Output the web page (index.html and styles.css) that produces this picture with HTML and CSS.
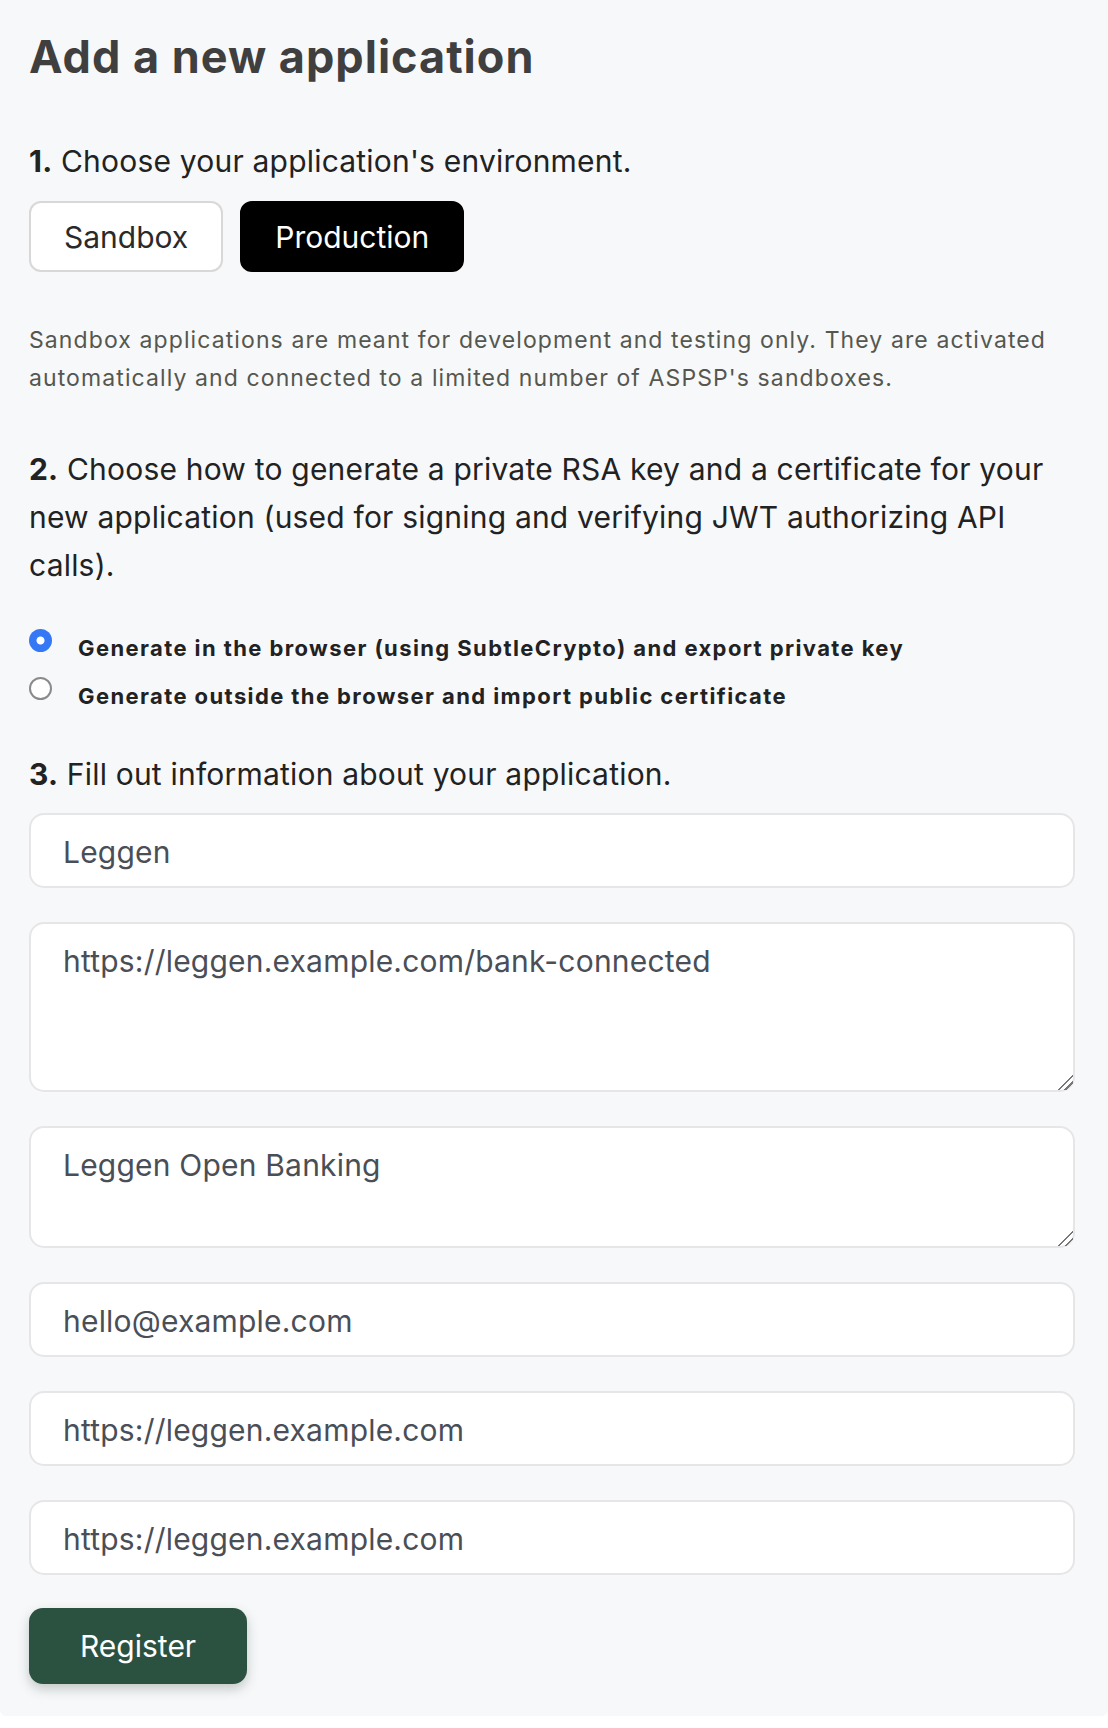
FILE: index.html
```html
<!DOCTYPE html>
<html lang="en">
<head>
    <meta charset="UTF-8">
    <meta name="viewport" content="width=device-width, initial-scale=1.0">
    <title>Add a new application</title>
    <link rel="stylesheet" href="styles.css">
</head>
<body>
    <div class="page">
      <h1>Add a new application</h1>

      <p class="step"><strong>1.</strong> Choose your application's environment.</p>
      <div class="env-buttons">
        <button type="button" class="env-btn">Sandbox</button>
        <button type="button" class="env-btn active">Production</button>
      </div>
      <p class="note">Sandbox applications are meant for development and testing only. They are activated automatically and connected to a limited number of ASPSP's sandboxes.</p>

      <p class="step step-2"><strong>2.</strong> Choose how to generate a private RSA key and a certificate for your new application (used for signing and verifying JWT authorizing API calls).</p>
      <div class="radio-list">
        <label class="radio-row">
          <input type="radio" name="keygen" value="browser" checked>
          <span>Generate in the browser (using SubtleCrypto) and export private key</span>
        </label>
        <label class="radio-row">
          <input type="radio" name="keygen" value="import">
          <span>Generate outside the browser and import public certificate</span>
        </label>
      </div>

      <p class="step step-3"><strong>3.</strong> Fill out information about your application.</p>
      <form class="app-form" onsubmit="return false;">
        <input type="text" class="field" name="name" value="Leggen">
        <textarea class="field area-lg" name="redirect_urls">https://leggen.example.com/bank-connected</textarea>
        <textarea class="field area-md" name="description">Leggen Open Banking</textarea>
        <input type="email" class="field" name="email" value="hello@example.com">
        <input type="text" class="field" name="privacy_url" value="https://leggen.example.com">
        <input type="text" class="field" name="terms_url" value="https://leggen.example.com">
        <div>
          <button type="submit" class="register-btn">Register</button>
        </div>
      </form>
    </div>
</body>
</html>
```

FILE: styles.css
```css
body {
    margin: 0;
    background-color: #ffffff;
    font-family: Inter, "Noto Sans", sans-serif;
    color: #222222;
}
.page {
    background-color: #f7f8fa;
    padding: 30px 33px 32px 29px;
    border-radius: 0 0 6px 6px;
}
h1 {
    margin: 0 0 53px;
    font-size: 45px;
    line-height: 54px;
    font-weight: 700;
    letter-spacing: 1px;
    color: #3f3f3f;
}
.step {
    margin: 0;
    font-size: 30px;
    line-height: 48px;
    letter-spacing: 0.2px;
    color: #222222;
}
.step strong {
    font-weight: 700;
}
.step-2 {
    margin-top: 48px;
}
.step-3 {
    margin-top: 30px;
}

/* environment buttons */
.env-buttons {
    display: flex;
    gap: 17px;
    margin-top: 16px;
}
.env-btn {
    height: 71px;
    padding: 0 33px;
    font-family: inherit;
    font-size: 30px;
    color: #2a2a2a;
    background-color: #ffffff;
    border: 2px solid #d8d8d8;
    border-radius: 12px;
    cursor: pointer;
}
.env-btn.active {
    background-color: #000000;
    border-color: #000000;
    color: #ffffff;
}
.note {
    margin: 49px 0 0;
    font-size: 23px;
    line-height: 38px;
    letter-spacing: 1.1px;
    color: #55574f;
}

/* key generation radios */
.radio-list {
    margin-top: 35px;
}
.radio-row {
    display: flex;
    align-items: flex-start;
    gap: 26px;
    height: 48px;
    font-size: 22px;
    line-height: 48px;
    font-weight: 700;
    letter-spacing: 1.4px;
    color: #222222;
    cursor: pointer;
}
.radio-row input {
    appearance: none;
    -webkit-appearance: none;
    flex: none;
    width: 23px;
    height: 23px;
    margin: 5px 0 0;
    border: 2.5px solid #8a8a8a;
    border-radius: 50%;
    background-color: #ffffff;
    box-sizing: border-box;
}
.radio-row input:checked {
    border: none;
    background: radial-gradient(circle, #ffffff 0 3.5px, #3478f6 4.5px);
}

/* application form */
.app-form {
    display: flex;
    flex-direction: column;
    gap: 34px;
    margin-top: 15px;
}
.field {
    display: block;
    width: 100%;
    box-sizing: border-box;
    margin: 0;
    padding: 18px 32px 16px;
    font-family: inherit;
    font-size: 30px;
    line-height: 37px;
    letter-spacing: 0.2px;
    color: #4a4e57;
    background-color: #ffffff;
    border: 2px solid #e6e6e8;
    border-radius: 15px;
    outline: none;
}
input.field {
    height: 75px;
}
textarea.field {
    padding-top: 19px;
    resize: vertical;
}
textarea.field::-webkit-resizer {
    background: linear-gradient(135deg, transparent 48%, #777777 48% 55%, transparent 55% 70%, #777777 70% 77%, transparent 77%);
}
.area-lg {
    height: 170px;
}
.area-md {
    height: 122px;
}
.register-btn {
    height: 76px;
    padding: 0 51px;
    margin-top: -1px;
    font-family: inherit;
    font-size: 30px;
    color: #ffffff;
    background-color: #2b5240;
    border: none;
    border-radius: 14px;
    box-shadow: 0 5px 12px rgba(30, 60, 45, 0.25);
    cursor: pointer;
}
```
